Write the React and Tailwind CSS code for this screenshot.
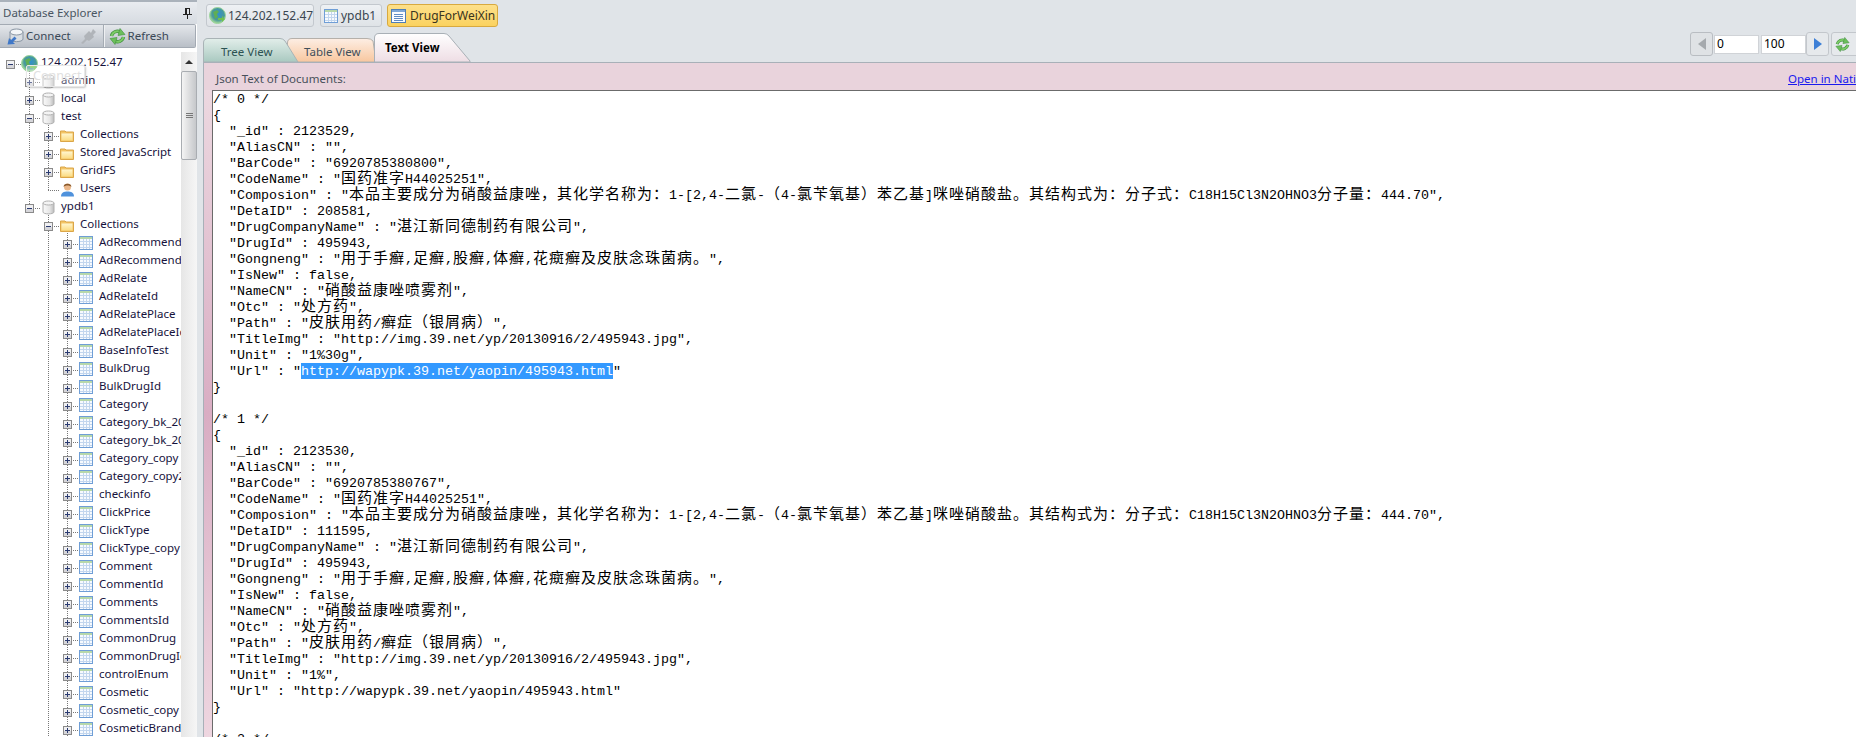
import React from 'react';

const collections = [
  'AdRecommendFlag', 'AdRecommendId', 'AdRelate', 'AdRelateId', 'AdRelatePlace', 'AdRelatePlaceId',
  'BaseInfoTest', 'BulkDrug', 'BulkDrugId', 'Category', 'Category_bk_2013', 'Category_bk_2014',
  'Category_copy', 'Category_copy2', 'checkinfo', 'ClickPrice', 'ClickType', 'ClickType_copy',
  'Comment', 'CommentId', 'Comments', 'CommentsId', 'CommonDrug', 'CommonDrugId', 'controlEnum',
  'Cosmetic', 'Cosmetic_copy', 'CosmeticBrand',
];

const treeRows = [
  { level: 0, label: '124.202.152.47', icon: 'globe', exp: 'minus', guides: [] },
  { level: 1, label: 'admin', icon: 'db', exp: 'plus', guides: [0] },
  { level: 1, label: 'local', icon: 'db', exp: 'plus', guides: [0] },
  { level: 1, label: 'test', icon: 'db', exp: 'minus', guides: [0] },
  { level: 2, label: 'Collections', icon: 'folder', exp: 'plus', guides: [0, 1] },
  { level: 2, label: 'Stored JavaScript', icon: 'folder', exp: 'plus', guides: [0, 1] },
  { level: 2, label: 'GridFS', icon: 'folder', exp: 'plus', guides: [0, 1] },
  { level: 2, label: 'Users', icon: 'user', exp: null, guides: [0, 1] },
  { level: 1, label: 'ypdb1', icon: 'db', exp: 'minus', guides: [0], last: true },
  { level: 2, label: 'Collections', icon: 'folder', exp: 'minus', guides: [0, 0] },
  ...collections.map(label => ({ level: 3, label, icon: 'table', exp: 'plus', guides: [0, 0, 1] })),
];

const doc = (id, barcode, code, detail, unit, selected) => [
  `/* ${id} */`,
  '{',
  `  "_id" : ${2123529 + id},`,
  '  "AliasCN" : "",',
  `  "BarCode" : "${barcode}",`,
  `  "CodeName" : "${code}",`,
  '  "Composion" : "本品主要成分为硝酸益康唑，其化学名称为：1-[2,4-二氯-（4-氯苄氧基）苯乙基]咪唑硝酸盐。其结构式为：分子式：C18H15Cl3N2OHNO3分子量：444.70",',
  `  "DetaID" : ${detail},`,
  '  "DrugCompanyName" : "湛江新同德制药有限公司",',
  '  "DrugId" : 495943,',
  '  "Gongneng" : "用于手癣,足癣,股癣,体癣,花癍癣及皮肤念珠菌病。",',
  '  "IsNew" : false,',
  '  "NameCN" : "硝酸益康唑喷雾剂",',
  '  "Otc" : "处方药",',
  '  "Path" : "皮肤用药/癣症（银屑病）",',
  '  "TitleImg" : "http://img.39.net/yp/20130916/2/495943.jpg",',
  `  "Unit" : "${unit}",`,
  selected ? 'SELECTED' : '  "Url" : "http://wapypk.39.net/yaopin/495943.html"',
  '}',
  '',
];

const lines = [
  ...doc(0, '6920785380800', '国药准字H44025251', 208581, '1%30g', true),
  ...doc(1, '6920785380767', '国药准字H44025251', 111595, '1%', false),
  '/* 2 */',
];

function Guide({ on }) {
  return (
    <svg width="19" height="18" className="shrink-0">
      {on && <line x1="4.5" y1="0" x2="4.5" y2="18" stroke="#777" strokeDasharray="1 1" />}
    </svg>
  );
}

function Connector({ level, exp, last }) {
  const bottom = exp ? (last ? 11 : 18) : 11;
  return (
    <svg width="15" height="18" className="shrink-0">
      {level > 0 && <line x1="4.5" y1="0" x2="4.5" y2={bottom} stroke="#777" strokeDasharray="1 1" />}
      <line x1="4" y1="11.5" x2="15" y2="11.5" stroke="#777" strokeDasharray="1 1" />
      {exp && (
        <g shapeRendering="crispEdges">
          <rect x="0.5" y="7.5" width="8" height="8" fill="#f0f0f2" stroke="#8a8a8a" />
          <rect x="1" y="12" width="7" height="3" fill="#d6d6da" />
          <line x1="2" y1="11.5" x2="7" y2="11.5" stroke="#2a3a70" />
          {exp === 'plus' && <line x1="4.5" y1="9" x2="4.5" y2="14" stroke="#2a3a70" />}
        </g>
      )}
    </svg>
  );
}

function GlobeIcon() {
  return (
    <svg width="17" height="17" viewBox="0 0 17 17" className="shrink-0">
      <defs>
        <radialGradient id="globeFill" cx="0.55" cy="0.4" r="0.6">
          <stop offset="0" stopColor="#2f8fd0" />
          <stop offset="0.65" stopColor="#4a9a98" />
          <stop offset="1" stopColor="#a5dc98" />
        </radialGradient>
      </defs>
      <circle cx="8.5" cy="8.5" r="8" fill="url(#globeFill)" stroke="#9ad49a" />
      <path d="M4 5 L8 3 L10 5 L8 7 L9 10 L6 12 L5 8 Z" fill="#5fae55" />
      <path d="M9 11 L13 11 L13 9 L16 12 L13 15 L13 13 L9 13 Z" fill="#6fc04f" />
    </svg>
  );
}

function DbIcon() {
  return (
    <svg width="13" height="15" viewBox="0 0 13 15" className="shrink-0">
      <defs>
        <linearGradient id="dbFill" x1="0" x2="1" y1="0" y2="0">
          <stop offset="0" stopColor="#fafafa" />
          <stop offset="0.6" stopColor="#e6e6e6" />
          <stop offset="1" stopColor="#bcbcbc" />
        </linearGradient>
      </defs>
      <path d="M1 3 V12 C1 14.5 12 14.5 12 12 V3 Z" fill="url(#dbFill)" stroke="#b0b0b0" />
      <ellipse cx="6.5" cy="3" rx="5.5" ry="2" fill="#f4f4f4" stroke="#b0b0b0" />
    </svg>
  );
}

function FolderIcon() {
  return (
    <svg width="14" height="13" viewBox="0 0 14 13" className="shrink-0">
      <defs>
        <linearGradient id="folderFill" x1="0" x2="0" y1="0" y2="1">
          <stop offset="0" stopColor="#fff6cf" />
          <stop offset="1" stopColor="#fbdc84" />
        </linearGradient>
      </defs>
      <path d="M0.5 2 H5 L6 3 H13.5 V12.5 H0.5 Z" fill="#f3c566" stroke="#dba648" />
      <path d="M1.5 4.5 H12.5 V11.5 H1.5 Z" fill="url(#folderFill)" />
    </svg>
  );
}

function TableIcon() {
  return (
    <svg width="14" height="14" viewBox="0 0 14 14" className="shrink-0" shapeRendering="crispEdges">
      <rect x="0.5" y="0.5" width="13" height="13" fill="#f7fafe" stroke="#6f9ed6" />
      <rect x="1" y="1" width="12" height="2" fill="#b7d8aa" />
      <path d="M1 5.5 H13 M1 8.5 H13 M1 11.5 H13 M4.5 3 V13 M7.5 3 V13 M10.5 3 V13" stroke="#c2d6ee" />
    </svg>
  );
}

function ListIcon() {
  return (
    <svg width="15" height="14" viewBox="0 0 15 14" className="shrink-0" shapeRendering="crispEdges">
      <rect x="0.5" y="0.5" width="14" height="13" fill="#fafcff" stroke="#4f7fb8" />
      <rect x="1" y="1" width="13" height="2" fill="#7fa8d8" />
      <path d="M3 5.5 H12 M3 7.5 H12 M3 9.5 H12 M3 11.5 H12" stroke="#5f8cc4" />
    </svg>
  );
}

function UserIcon() {
  return (
    <svg width="15" height="15" viewBox="0 0 15 15" className="shrink-0">
      <path d="M1 14.5 C1 10.5 4 9.5 7.5 9.5 C11 9.5 14 10.5 14 14.5 Z" fill="#4f92dc" />
      <circle cx="7.5" cy="5" r="3.5" fill="#eab78a" />
      <path d="M3.6 5 C3 0.5 12 0.5 11.4 5 C10 3 5 3 3.6 5 Z" fill="#8a5a2c" />
    </svg>
  );
}

function NodeIcon({ name }) {
  if (name === 'globe') return <GlobeIcon />;
  if (name === 'db') return <DbIcon />;
  if (name === 'folder') return <FolderIcon />;
  if (name === 'user') return <UserIcon />;
  return <TableIcon />;
}

function TreeRow({ row }) {
  const root = row.level === 0;
  return (
    <div className="flex h-[18px] items-center pl-[6px] whitespace-nowrap">
      {row.guides.map((on, i) => <Guide key={i} on={!!on} />)}
      <Connector level={row.level} exp={row.exp} last={row.last} />
      <div className={`${root ? 'w-[17px]' : 'w-[16px]'} mt-[2px] flex shrink-0 justify-center`}>
        <NodeIcon name={row.icon} />
      </div>
      <span className={`${root ? 'ml-[3px]' : 'ml-[5px]'} text-[11.5px] leading-[18px] text-[#16123c]`}>{row.label}</span>
    </div>
  );
}

function PlugIcon({ off }) {
  return (
    <svg width="17" height="17" viewBox="0 0 17 17">
      {off ? (
        <path d="M1 15 L5 11 L4 8 L9 3 L11 5 L13 1 L16 4 L13 7 L14 9 L9 13 L7 12 L3 16 Z" fill="#b0b4b9" />
      ) : (
        <g>
          <path d="M3 4 V11 C3 14.5 16 14.5 16 11 V4 Z" fill="#d8dde2" stroke="#8a96a4" />
          <ellipse cx="9.5" cy="4" rx="6.5" ry="3" fill="#f3f5f7" stroke="#8a96a4" />
          <path d="M0.5 16.5 L2 10 L4 12 L7.5 8.5 L9.5 10.5 L6 14 L8 16 Z" fill="#3f78c8" />
        </g>
      )}
    </svg>
  );
}

function RefreshIcon({ size = 17 }) {
  return (
    <svg width={size} height={size} viewBox="0 0 17 17" fill="none">
      <path d="M2.5 8 A6 6 0 0 1 11.5 4.2" stroke="#3f8f3f" strokeWidth="3.4" />
      <path d="M14.5 9 A6 6 0 0 1 5.5 12.8" stroke="#3f8f3f" strokeWidth="3.4" />
      <path d="M2.5 8 A6 6 0 0 1 11.5 4.2" stroke="#7ccb66" strokeWidth="2" />
      <path d="M14.5 9 A6 6 0 0 1 5.5 12.8" stroke="#7ccb66" strokeWidth="2" />
      <path d="M11 0.5 L16 6.5 L9 7.5 Z" fill="#6cbf5a" stroke="#3f8f3f" strokeWidth="0.6" />
      <path d="M6 16.5 L1 10.5 L8 9.5 Z" fill="#6cbf5a" stroke="#3f8f3f" strokeWidth="0.6" />
    </svg>
  );
}

function Explorer() {
  return (
    <div className="flex h-full w-[197px] shrink-0 flex-col bg-white">
      <div className="flex h-[24px] shrink-0 items-center justify-between border-t-2 border-[#aab2bb] bg-gradient-to-b from-[#e9ecf0] to-[#d6dbe1] pl-[3px] pr-[5px]">
        <span className="text-[11.5px] text-[#4a5662]">Database Explorer</span>
        <svg width="9" height="11" viewBox="0 0 9 11" shapeRendering="crispEdges">
          <path d="M2 0 H7 V6 H9 V7 H5 V11 H4 V7 H0 V6 H2 Z M4 1 V6 H6 V1 Z" fill="#222" fillRule="evenodd" />
        </svg>
      </div>
      <div className="flex h-[24px] w-[196px] shrink-0 items-center rounded-r-[2px] border-b border-r border-t border-[#a3aab3] bg-gradient-to-b from-[#e4e7eb] to-[#b9bfc7] pl-[7px]">
        <PlugIcon />
        <span className="ml-[2px] text-[11.5px] text-[#3a4856]">Connect</span>
        <div className="ml-[9px]"><PlugIcon off /></div>
        <div className="ml-[6px] h-[22px] w-[2px] border-l border-r border-l-[#a4abb3] border-r-[#eef0f2]" />
        <div className="ml-[4px]"><RefreshIcon /></div>
        <span className="ml-[2px] text-[11.5px] text-[#3a4856]">Refresh</span>
      </div>
      <div className="relative flex min-h-0 flex-1 pt-[4px]">
        <div className="min-w-0 flex-1 overflow-hidden pt-px">
          {treeRows.map((row, i) => <TreeRow key={i} row={row} />)}
        </div>
        <div className="flex w-[16px] shrink-0 flex-col bg-gradient-to-r from-[#e6e6e6] to-[#f6f6f6]">
          <div className="flex h-[19px] shrink-0 items-center justify-center">
            <div className="h-0 w-0 border-x-[4px] border-b-[4px] border-x-transparent border-b-[#333]" />
          </div>
          <div className="flex h-[89px] shrink-0 flex-col items-center justify-center gap-[1px] rounded-[2px] border border-[#a9adb2] bg-gradient-to-r from-[#f4f4f4] to-[#c6c8cb]">
            <div className="h-px w-[7px] bg-[#777]" />
            <div className="h-px w-[7px] bg-[#777]" />
            <div className="h-px w-[7px] bg-[#777]" />
          </div>
        </div>
        <div className="absolute left-[26px] top-[17px] flex h-[22px] w-[59px] items-center rounded-[2px] border border-[#e8e8e8] bg-white/30 pl-[6px] text-[12.5px] text-[#e0e0e0] shadow-[1px_1px_2px_rgba(0,0,0,0.22)]">
          Connect
        </div>
      </div>
    </div>
  );
}

function DocButton({ active, width, children }) {
  const tone = active
    ? 'border-[#d8a93f] bg-gradient-to-b from-[#fde08a] to-[#fbd25f]'
    : 'border-[#c3c8ce] bg-gradient-to-b from-[#eef1f4] to-[#dfe3e7]';
  return (
    <div className={`flex h-[23px] shrink-0 items-center rounded-[3px] border ${tone} ${width}`}>
      {children}
    </div>
  );
}

function TabShape({ w, h, d, id, from, to, stroke }) {
  return (
    <svg width={w} height={h} className="absolute inset-0">
      <defs>
        <linearGradient id={id} x1="0" x2="0" y1="0" y2="1">
          <stop offset="0" stopColor={from} />
          <stop offset="1" stopColor={to} />
        </linearGradient>
      </defs>
      <path d={d} fill={`url(#${id})`} stroke={stroke} />
    </svg>
  );
}

function Tabs() {
  return (
    <div className="flex h-[29px] items-end">
      <div className="relative z-[1] h-[24px] w-[96px] shrink-0">
        <TabShape w={96} h={24} id="tabTree" from="#e2eeea" to="#a9c9c0" stroke="#a9b3b6"
          d="M0.5 24 V5 Q0.5 0.5 5 0.5 H77 Q80 0.5 82 3 L95 24 Z" />
        <span className="relative flex h-full items-center pl-[18px] pt-[3px] text-[11.5px] text-[#2c5252]">Tree View</span>
      </div>
      <div className="relative -ml-[12px] h-[24px] w-[90px] shrink-0">
        <TabShape w={90} h={24} id="tabTable" from="#fdeee4" to="#f8c79f" stroke="#b5b0aa"
          d="M0.5 24 V5 Q0.5 0.5 5 0.5 H80 Q84 0.5 86 3 L89 24 Z" />
        <span className="relative flex h-full items-center pl-[17px] pt-[3px] text-[11.5px] text-[#3f4f5a]">Table View</span>
      </div>
      <div className="relative z-[2] -ml-[3px] h-[29px] w-[97px] shrink-0">
        <TabShape w={97} h={29} id="tabText" from="#ffffff" to="#eeddE4" stroke="#a9b0b6"
          d="M0.5 29 V5 Q0.5 0.5 5 0.5 H70 Q73 0.5 75 3 L96 28 V29 Z" />
        <span className="relative flex h-full items-center pl-[11px] pt-px text-[11.5px] font-bold text-black">Text View</span>
      </div>
    </div>
  );
}

function Paging() {
  return (
    <div className="-mt-[1px] flex h-[24px] w-[166px] shrink-0 items-center self-start overflow-hidden">
      <div className="flex h-[24px] w-[23px] shrink-0 items-center justify-center rounded-[3px] border border-[#b9bdc2] bg-[#dfe2e5]">
        <div className="h-0 w-0 border-y-[6px] border-r-[8px] border-y-transparent border-r-[#a5a9ad]" />
      </div>
      <div className="ml-px flex h-[19px] w-[45px] shrink-0 items-center border border-[#d0d3d7] bg-white pl-[2px] text-[12px] text-black">0</div>
      <div className="ml-[2px] flex h-[19px] w-[45px] shrink-0 items-center border border-[#d0d3d7] bg-white pl-[2px] text-[12px] text-black">100</div>
      <div className="flex h-[24px] w-[23px] shrink-0 items-center justify-center rounded-[3px] border border-[#c3c7cc] bg-[#e6e9ec]">
        <div className="h-0 w-0 border-y-[6px] border-l-[8px] border-y-transparent border-l-[#3d7fd6]" />
      </div>
      <div className="ml-[2px] flex h-[24px] w-[30px] shrink-0 items-center rounded-[3px] border border-[#c3c7cc] bg-[#e6e9ec] pl-[3px]">
        <RefreshIcon size={15} />
      </div>
    </div>
  );
}

// Latin runs are 8px wide per char, CJK runs 16px per char, like the old GDI text box
function CodeText({ text }) {
  const parts = text.split(/([^\x00-\x7f]+)/);
  return parts.map((part, i) => (
    i % 2 === 1
      ? <span key={i} className="text-[15px] leading-[0] tracking-[1px] [font-family:'Noto_Sans_CJK_SC',sans-serif]">{part}</span>
      : <span key={i}>{part}</span>
  ));
}

function CodeLine({ text }) {
  if (text === 'SELECTED') {
    return (
      <div className="h-[16px] whitespace-pre leading-[18px]">
        {'  "Url" : "'}
        <span className="inline-block h-[16px] bg-[#3399ff] align-top text-white">http://wapypk.39.net/yaopin/495943.html</span>
        {'"'}
      </div>
    );
  }
  return <div className="h-[16px] whitespace-pre leading-[18px]"><CodeText text={text} /></div>;
}

function DocsPanel() {
  return (
    <div className="flex min-h-0 flex-1 flex-col border-l border-t border-[#a8b0b8]">
      <div className="flex h-[27px] shrink-0 items-center justify-between bg-[#e9d3dc] pl-[12px] pt-[5px]">
        <span className="text-[11.5px] text-[#47505a]">Json Text of Documents:</span>
        <a className="w-[68px] overflow-hidden whitespace-nowrap text-[11.5px] text-[#1a1aee] underline">Open in Native</a>
      </div>
      <div className="flex min-h-0 flex-1">
        <div className="w-[8px] shrink-0 bg-[linear-gradient(to_bottom,#ecd8e0_0%,#d9adc3_50%,#eed6e0_100%)]" />
        <div className="min-w-0 flex-1 overflow-hidden border-l border-t border-[#6b6b6b] bg-white text-[13.33px] text-black [font-family:'Liberation_Mono',monospace]">
          {lines.map((line, i) => <CodeLine key={i} text={line} />)}
        </div>
      </div>
    </div>
  );
}

export default function App() {
  return (
    <div className="flex h-[737px] w-[1856px] overflow-hidden [font-family:'Noto_Sans',sans-serif]">
      <Explorer />
      <div className="flex h-full min-w-0 flex-1 flex-col bg-[#e0e4e8] pl-[6px]">
        <div className="flex h-[33px] shrink-0 items-start gap-[5px] pl-[3px] pt-[4px]">
          <DocButton width="w-[108px]">
            <div className="ml-[2px]"><GlobeIcon /></div>
            <span className="ml-[2px] text-[12px] text-[#3a4650]">124.202.152.47</span>
          </DocButton>
          <DocButton width="w-[62px] ml-px">
            <div className="ml-[3px]"><TableIcon /></div>
            <span className="ml-[3px] text-[12px] text-[#3a4650]">ypdb1</span>
          </DocButton>
          <DocButton active width="w-[111px]">
            <div className="ml-[3px]"><ListIcon /></div>
            <span className="ml-[4px] text-[12px] text-[#3a3420]">DrugForWeiXin</span>
          </DocButton>
        </div>
        <div className="flex shrink-0 justify-between">
          <Tabs />
          <Paging />
        </div>
        <DocsPanel />
      </div>
    </div>
  );
}
